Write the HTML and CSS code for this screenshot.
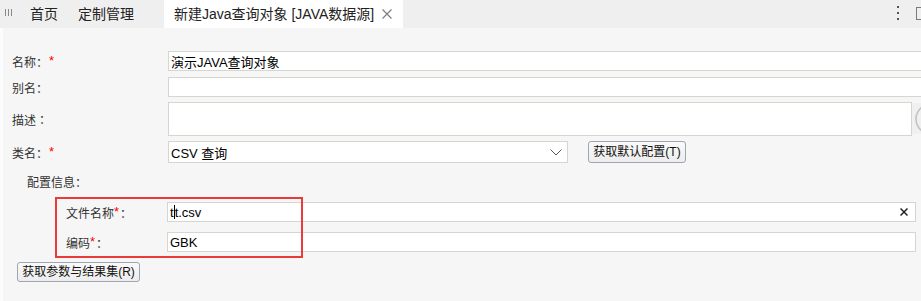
FILE: index.html
```html
<!DOCTYPE html>
<html lang="zh-CN">
<head>
<meta charset="utf-8">
<title>新建Java查询对象</title>
<link rel="stylesheet" href="styles.css">
</head>
<body>
<div class="page">
  <div class="tabbar">
    <div class="grip"><i></i><i></i><i></i></div>
    <div class="tab">首页</div>
    <div class="tab">定制管理</div>
    <div class="tab active">
      <span>新建Java查询对象 [JAVA数据源]</span>
      <svg class="tab-close" width="10" height="10" viewBox="0 0 10 10"><path d="M0.5 0.5L9.5 9.5M9.5 0.5L0.5 9.5" stroke="#7a7a7a" stroke-width="1.1" fill="none"/></svg>
    </div>
    <div class="tools">
      <div class="kebab"><i></i><i></i><i></i></div>
      <div class="winbox"></div>
    </div>
  </div>

  <div class="content">
    <div class="row r-name">
      <div class="label">名称<span class="colon">：</span><em>*</em></div>
      <div class="input wide">演示JAVA查询对象</div>
    </div>
    <div class="row r-alias">
      <div class="label">别名<span class="colon">：</span></div>
      <div class="input wide"></div>
    </div>
    <div class="row r-desc">
      <div class="label">描述<span class="colon">：</span></div>
      <div class="textarea"></div>
      <div class="spin"><svg width="9" height="30" viewBox="0 0 9 30"><path d="M9 3 Q3 8 3 15 Q3 22 9 27" stroke="#c2c2c2" stroke-width="1.6" fill="none"/></svg></div>
    </div>
    <div class="row r-class">
      <div class="label">类名<span class="colon">：</span><em>*</em></div>
      <div class="select">
        <span>CSV 查询</span>
        <svg class="chev" width="12" height="7" viewBox="0 0 12 7"><path d="M0.5 0.5L6 6L11.5 0.5" stroke="#555" stroke-width="1" fill="none"/></svg>
      </div>
      <button class="btn btn-default">获取默认配置(T)</button>
    </div>
    <div class="cfg-title">配置信息<span class="colon">：</span></div>
    <div class="row cfg r-file">
      <div class="label cfg-label">文件名称<em>*</em><span class="colon">：</span></div>
      <div class="input cfg-input">
        <span>t<span class="caret"></span>t.csv</span>
        <svg class="clear" width="8" height="8" viewBox="0 0 8 8"><path d="M0.5 0.5L7.5 7.5M7.5 0.5L0.5 7.5" stroke="#222" stroke-width="1.5" fill="none"/></svg>
      </div>
    </div>
    <div class="row cfg r-enc">
      <div class="label cfg-label">编码<em>*</em><span class="colon">：</span></div>
      <div class="input cfg-input">GBK</div>
    </div>
    <button class="btn btn-fetch">获取参数与结果集(R)</button>
  </div>

  <div class="highlight"></div>
</div>
</body>
</html>
```
FILE: styles.css
```css
* { box-sizing: border-box; }
html, body {
  margin: 0;
  padding: 0;
  width: 921px;
  height: 301px;
  overflow: hidden;
  background: #f6f6f6;
}
body {
  font-family: "Liberation Sans", "Noto Sans CJK SC", sans-serif;
  color: #333;
}
.page {
  position: relative;
  width: 921px;
  height: 301px;
  overflow: hidden;
}

/* ---------- tab bar ---------- */
.tabbar {
  display: flex;
  align-items: stretch;
  height: 28px;
  background: #efefef;
  font-size: 14px;
  color: #222;
}
.grip {
  width: 20px;
  display: flex;
  gap: 2px;
  padding: 9px 0 0 5px;
}
.grip i {
  display: block;
  width: 1px;
  height: 7px;
  background: #8a8a8a;
}
.tab {
  display: flex;
  align-items: center;
  padding: 0 10px;
  line-height: 28px;
}
.tab.active {
  margin-left: 20px;
  padding: 0 11px 0 10px;
  background: #fff;
  gap: 8px;
}
.tab-close { display: block; }
.tools {
  margin-left: auto;
  margin-right: -5px;
  display: flex;
  align-items: flex-start;
  gap: 17px;
}
.kebab {
  display: flex;
  flex-direction: column;
  gap: 4px;
  padding-top: 6px;
}
.kebab i {
  display: block;
  width: 2px;
  height: 2px;
  background: #555;
}
.winbox {
  margin-top: 7px;
  width: 10px;
  height: 13px;
  border: 1px solid #7a7a7a;
}

/* ---------- form ---------- */
.content {
  border-left: 3px solid #fcfcfc;
  padding: 23px 0 0 9px;
  height: 273px;
  font-size: 12px;
}
.row {
  display: flex;
  align-items: center;
}
.label {
  width: 156px;
  flex: none;
  color: #333;
  font-size: 12px;
}
.colon {
  font-family: "Noto Sans CJK TC", "Noto Sans CJK SC", sans-serif;
}
.label em {
  font-style: normal;
  color: #f00;
  font-size: 13px;
  position: relative;
  top: -2px;
  margin-left: 1px;
}
.input, .textarea, .select {
  background: #fff;
  border: 1px solid #d6d6d1;
  font-size: 13px;
  color: #000;
}
.input {
  height: 20px;
  display: flex;
  align-items: center;
  padding-left: 2px;
}
.wide { width: 760px; flex: none; }
.r-name { margin-bottom: 6px; }
.r-alias { margin-bottom: 5px; }
.r-desc { margin-bottom: 5px; height: 34px; align-items: stretch; }
.r-desc .label { display: flex; align-items: center; }
.textarea {
  width: 744px;
  height: 34px;
  flex: none;
}
.spin {
  width: 16px;
  flex: none;
  margin: 1px 0 2px;
  background: #f0f0f0;
  display: flex;
  align-items: center;
  padding-left: 1px;
}
.spin svg { display: block; }
.select {
  width: 400px;
  height: 22px;
  flex: none;
  display: flex;
  align-items: center;
  justify-content: space-between;
  padding: 0 5px 0 2px;
}
.chev { display: block; }
.btn {
  font-family: "Liberation Sans", "Noto Sans CJK SC", sans-serif;
  font-size: 12px;
  color: #111;
  background: linear-gradient(#f9f9f9, #ededed);
  border: 1px solid #9ea6b3;
  border-radius: 3px;
  padding: 0 4px;
  margin: 0;
  line-height: 18px;
}
.btn-default {
  margin-left: 20px;
  height: 22px;
  width: 98px;
}
.cfg-title {
  margin-top: 9px;
  padding-left: 15px;
  height: 20px;
  line-height: 20px;
}
.cfg { margin-top: 10px; }
.cfg-label {
  width: 155px;
  padding-left: 54px;
}
.cfg-label em { margin-left: 0; margin-right: 1px; }
.cfg-input {
  width: 749px;
  flex: none;
  justify-content: space-between;
  padding-right: 7px;
}
.caret {
  display: inline-block;
  width: 1px;
  height: 14px;
  background: #000;
  vertical-align: -2px;
}
.clear { display: block; }
.btn-fetch {
  margin: 10px 0 0 5px;
  height: 20px;
  width: 123px;
  display: block;
}

/* annotation overlay */
.highlight {
  position: absolute;
  left: 55px;
  top: 197px;
  width: 248px;
  height: 61px;
  border: 2px solid #ea3b3b;
  pointer-events: none;
}
```
